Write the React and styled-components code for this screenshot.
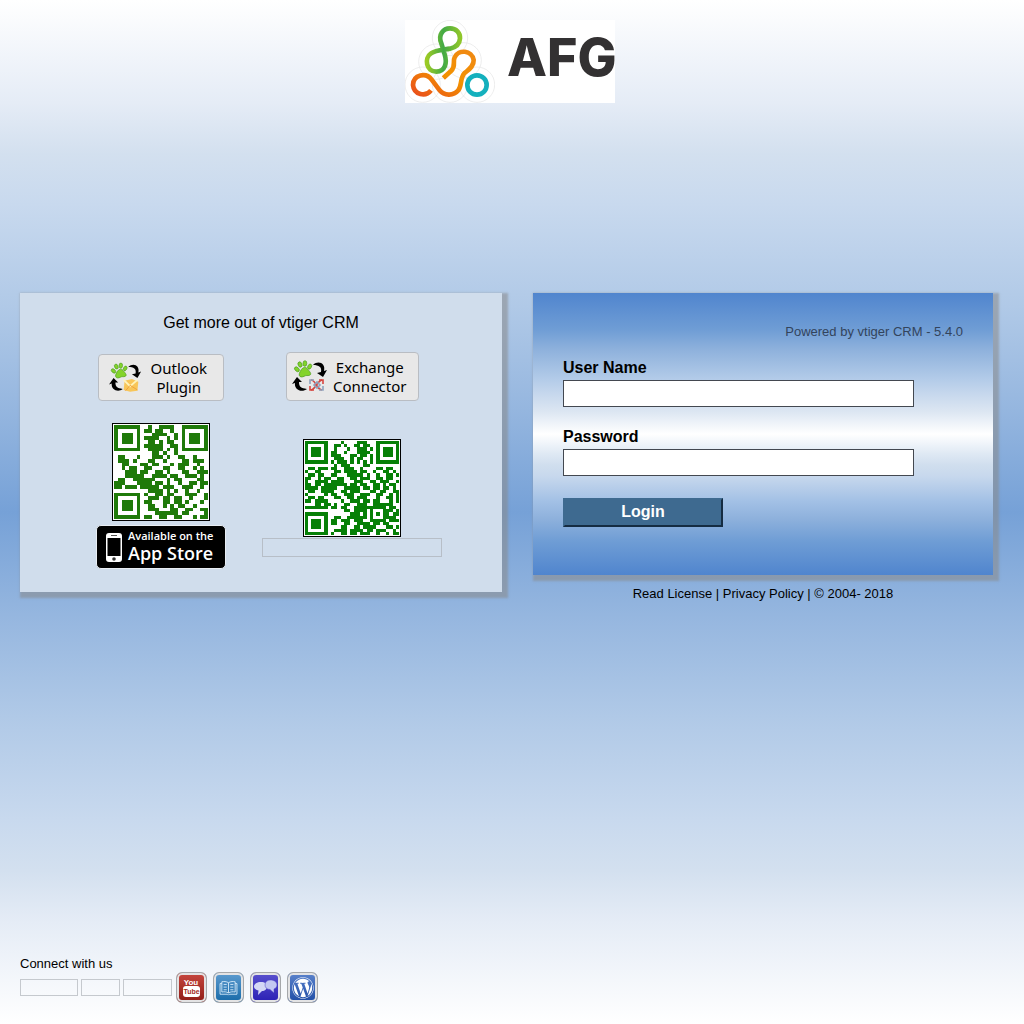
import React from "react";
import styled, { createGlobalStyle } from "styled-components";
import { FaWordpress } from "react-icons/fa";

const GlobalStyle = createGlobalStyle`
  *, *::before, *::after { box-sizing: border-box; }
  body {
    margin: 0;
    font-family: "Liberation Sans", Arial, sans-serif;
    color: #000;
  }
  a { color: inherit; text-decoration: none; }
`;

const Page = styled.div`
  min-height: 100vh;
  display: flex;
  flex-direction: column;
  padding: 20px 24px 21px 20px;
  background: linear-gradient(
    #fff 0%, #e5ecf6 10%, #d3e0ef 15%, #c8d9ee 20%, #b0c9e7 30%, #95b6df 40%,
    #76a1d7 50%, #95b6df 60%, #b0c9e7 70%, #c8d9ee 80%, #d3e0ef 85%, #e5ecf6 90%, #fff 100%
  );
`;

const Logo = styled.h1`
  display: flex;
  align-items: center;
  align-self: center;
  width: 210px;
  height: 83px;
  margin: 0;
  overflow: hidden;
  background: #fff;
`;

const LogoMark = styled.svg`
  flex: none;
  width: 90px;
  height: 83px;
`;

const LogoName = styled.span`
  padding: 0 0 8px 12px;
  font: 800 52px/60px Inter, sans-serif;
  color: #333132;
`;

const Main = styled.main`
  display: flex;
  align-items: flex-start;
  gap: 31px;
  margin-top: 190px;
  padding-right: 7px;
`;

const shadow = "3px 3px 2px 3px rgba(136, 136, 136, 0.55)";

const Promo = styled.section`
  flex: 1;
  padding: 20px 10px 23px;
  background: #d0ddec;
  box-shadow: ${shadow};
`;

const PromoTitle = styled.h2`
  margin: 0 0 19px;
  font-size: 16px;
  font-weight: 400;
  line-height: 20px;
  text-align: center;
`;

const PromoGrid = styled.div`
  display: grid;
  grid-template-columns: 162px 180px;
  justify-content: center;
  gap: 22px 20px;
`;

const PluginCell = styled.div`
  display: flex;
  justify-content: center;
  align-items: flex-end;
`;

const PluginLink = styled.a`
  display: flex;
  align-items: center;
  justify-content: space-between;
  width: ${(p) => (p.$wide ? "133px" : "126px")};
  height: ${(p) => (p.$wide ? "49px" : "47px")};
  padding: ${(p) => (p.$wide ? "0 11px 0 5px" : "0 16px 0 10px")};
  border: 1px solid #b9bdc3;
  border-radius: 4px;
  background: #e8e8e8;
  font: 15px/19px "Noto Sans", sans-serif;
  text-align: center;
`;

const CodeCell = styled.div`
  display: flex;
  flex-direction: column;
  align-items: center;
  gap: ${(p) => (p.$lowered ? "1px" : "4px")};
  padding-top: ${(p) => (p.$lowered ? "16px" : "0")};
`;

const QrFrame = styled.svg`
  display: block;
  width: 98px;
  height: 98px;
  padding: 1px;
  border: 1px solid #000;
  background: #fff;
`;

const EmptyBadge = styled.a`
  width: 180px;
  height: 19px;
  border: 1px solid #b7bec7;
`;

const StoreBadge = styled.a`
  display: flex;
  align-items: center;
  gap: 6px;
  width: 130px;
  height: 44px;
  padding: 0 9px;
  border: 1px solid #e9eef4;
  border-radius: 5px;
  background: #000;
  color: #fff;
`;

const StoreIcon = styled.svg`
  flex: none;
  width: 16px;
  height: 29px;
`;

const StoreText = styled.span`
  display: flex;
  flex-direction: column;
  padding-bottom: 3px;
  font-family: "Open Sans", sans-serif;
  white-space: nowrap;
`;

const StoreSmall = styled.span`
  font-size: 11px;
  font-weight: 600;
  line-height: 15px;
`;

const StoreLarge = styled.span`
  font-size: 18px;
  font-weight: 600;
  line-height: 20px;
`;

const LoginColumn = styled.div`
  width: 460px;
`;

const LoginForm = styled.form`
  display: flex;
  flex-direction: column;
  padding: 29px 30px 48px;
  background: linear-gradient(
    #5085ce 0%, #6f9dd5 13%, #8eb1dc 20%, #b1cae8 30%, #c7d8ed 36%, #dce6f2 42%,
    #fff 50%, #dfe9f4 57%, #d0deee 61%, #c7d8ed 65%, #a2c0e5 74%, #8eb1dc 80%, #6f9dd5 88%, #5085ce 100%
  );
  box-shadow: ${shadow};
`;

const Powered = styled.p`
  margin: 0 0 16px;
  font-size: 13px;
  line-height: 20px;
  text-align: right;
  color: #33445c;
`;

const Label = styled.label`
  margin-bottom: 2px;
  font-size: 16px;
  font-weight: 700;
  line-height: 20px;
`;

const Field = styled.input`
  width: 351px;
  max-width: 100%;
  height: 27px;
  margin-bottom: 20px;
  padding: 0 4px;
  border: 1px solid #434850;
  border-radius: 0;
  background: #fff;
  font: 16px "Liberation Sans", Arial, sans-serif;
`;

const LoginButton = styled.button`
  width: 160px;
  height: 29px;
  margin-top: 2px;
  padding: 0 0 2px;
  border: 2px solid #3e6a90;
  border-right-color: #152c42;
  border-bottom-color: #152c42;
  background: #3e6a90;
  color: #fff;
  font: 700 16px/20px "Liberation Sans", Arial, sans-serif;
`;

const Legal = styled.p`
  margin: 9px 0 0;
  font-size: 13px;
  line-height: 20px;
  text-align: center;
`;

const Footer = styled.footer`
  margin-top: auto;
`;

const FooterTitle = styled.p`
  margin: 0;
  font-size: 13px;
  line-height: 16px;
`;

const SocialRow = styled.nav`
  display: flex;
  align-items: center;
  gap: 4px;
`;

const SocialGroup = styled.div`
  display: flex;
  align-items: center;
  gap: ${(p) => p.$gap};
`;

const EmptySocial = styled.a`
  width: ${(p) => p.$width};
  height: 17px;
  border: 1px solid #c5c9ce;
`;

const SocialIcon = styled.a`
  display: grid;
  place-items: center;
  width: 31px;
  height: 31px;
  border: 1px solid #a5a7aa;
  border-radius: 6px;
  background: linear-gradient(${(p) => p.$from}, ${(p) => p.$to});
  box-shadow: inset 0 0 0 2px #e3e3e4;
  color: #fff;
`;

const TubeText = styled.text`
  font: 700 ${(p) => p.$size} "Liberation Sans", sans-serif;
  text-anchor: middle;
`;

const appStoreCode = [
  "1111111001001111001111111",
  "1000001011011001001000001",
  "1011101000111100101011101",
  "1011101011110010101011101",
  "1011101001101011001011101",
  "1000001011111001101000001",
  "1111111001111010101111111",
  "0000000000110100100000000",
  "0110001000111010011001000",
  "0111010001100100001101110",
  "0011000110110001011100100",
  "0010110011000110011001010",
  "0001110110011010001100111",
  "0001111100111101100111010",
  "0110011111100010110000110",
  "1110001111011010010011011",
  "1101110111110111001110010",
  "0000000001111010100100100",
  "1111111010011011000111001",
  "1000001001110110110010001",
  "1011101011000110110100010",
  "1011101001100101011001000",
  "1011101001110001100110011",
  "1000001000011111101100001",
  "1111111011001100110001011",
];

const androidCode = [
  "11111110000100001110001111111",
  "10000010011010011011001000001",
  "10111010010001001110101011101",
  "10111010110010001111001011101",
  "10111010111000110110101011101",
  "10000010011100101100101000001",
  "11111110101110101010101111111",
  "00000000010111000011000000000",
  "01101110110011100100001101100",
  "10011000011011110110010011010",
  "01101100110001111101001001101",
  "11001011001100110111001101100",
  "10011110111100011100110111001",
  "11011011111110110110011010110",
  "11110111110011111011011011010",
  "01100111100110111000110110011",
  "10000010110011100111001100101",
  "01101100011001101110001001101",
  "11011110000100111011011000101",
  "00011011010011001110011111100",
  "11111110110110011111111110110",
  "00000000000011011110100011101",
  "11111110000000111010101011011",
  "10000010011001111110100011110",
  "10111010110111011100111110111",
  "10111010110011001111011011000",
  "10111010000110011011110001101",
  "10000010011110111101101110010",
  "11111110100110110111001001011",
];

function QrCode({ rows, color, label }) {
  const n = rows.length;
  const d = rows
    .flatMap((row, y) => [...row].map((c, x) => (c === "1" ? `M${x} ${y}h1v1h-1z` : "")))
    .join("");
  return (
    <QrFrame viewBox={`0 0 ${n} ${n}`} role="img" aria-label={label} shapeRendering="crispEdges">
      <path d={d} fill={color} />
    </QrFrame>
  );
}

function Mark() {
  return (
    <LogoMark viewBox="15 18 270 249" aria-hidden="true" fill="none">
      <defs>
        <linearGradient id="leaf" x1="0" y1="0" x2="1" y2="0">
          <stop offset="0" stopColor="#9bca25" />
          <stop offset="0.5" stopColor="#43aa45" />
          <stop offset="1" stopColor="#8fc62a" />
        </linearGradient>
        <linearGradient id="flame" x1="0" y1="1" x2="0.8" y2="0">
          <stop offset="0" stopColor="#e94e1b" />
          <stop offset="0.55" stopColor="#f39200" />
          <stop offset="1" stopColor="#f08a10" />
        </linearGradient>
      </defs>
      <g stroke="#e4e4e4" strokeWidth="2">
        <circle cx="150" cy="72" r="53" />
        <circle cx="109" cy="143" r="53" />
        <circle cx="191" cy="139" r="53" />
        <circle cx="68" cy="212" r="53" />
        <circle cx="150" cy="212" r="53" />
        <circle cx="231" cy="212" r="53" />
      </g>
      <path
        d="M130 192L153 171C169 155 157 143 164 130C175 105 216 108 221 138C222 158 204 168 193 178C180 193 186 214 175 229C160 247 132 245 119 229L95 197C78 174 40 182 39 213C42 243 77 250 93 229"
        stroke="url(#flame)"
        strokeWidth="14"
      />
      <path
        d="M124 88C113 62 130 43 150 43C169 43 181 57 180 73C179 91 167 100 150 104C127 108 107 108 93 118C72 132 78 173 109 173C136 172 142 147 134 121C130 108 127 98 124 88Z"
        stroke="url(#leaf)"
        strokeWidth="14"
      />
      <circle cx="231" cy="213" r="29" stroke="#14b0bd" strokeWidth="14" />
    </LogoMark>
  );
}

function SyncArt({ exchange }) {
  return (
    <svg width={exchange ? 36 : 33} height="34" viewBox="0 0 36 34" aria-hidden="true">
      <g fill="#83d32b" stroke="#4f9e1e" strokeWidth="0.7" transform="rotate(-12 11 9)">
        <ellipse cx="5" cy="8" rx="1.9" ry="2.8" transform="rotate(-35 5 8)" />
        <ellipse cx="9" cy="4" rx="1.9" ry="2.8" transform="rotate(-10 9 4)" />
        <ellipse cx="14" cy="4" rx="1.9" ry="2.8" transform="rotate(15 14 4)" />
        <ellipse cx="18" cy="8" rx="1.8" ry="2.7" transform="rotate(40 18 8)" />
        <path d="M11 8c3-1 4 1 5 3s3 5 0 5.500c-2 .3-3-1-5-.2-2 .7-5 .3-5-2 0-2 3-5.300 5-6.300z" />
      </g>
      <path d="M21 5c5-5 13-2 11 6l3-1-4 7-6-4 4-1c1-5-2-7-8-7z" fill="#000" />
      <path d="M5 17l5 5-3 0c0 5 2 6 8 7-5 4-13 1-12-6l-3 1z" fill="#000" />
      {exchange ? (
        <g fill="none" strokeWidth="1.6">
          <path d="M19 20c5 0 5 9 11 10M19 30c5-1 6-9 11-10" stroke="#d5453f" />
          <path d="M18 24v-4h4M27 30h4v-4" stroke="#8da2bd" />
          <path d="M27 20h4v4M18 26v4h4" stroke="#d5453f" />
          <path d="M22 25l3-3 3 3-3 3z" stroke="#8da2bd" />
        </g>
      ) : (
        <g>
          <path d="M17 20l8-2 7 3-1 10-8 1-7-2z" fill="#f8c659" />
          <path d="M16 19l7 7 8-7" fill="none" stroke="#fff3b9" strokeWidth="2" />
          <path d="M18 31l5-6 8 5" fill="none" stroke="#f0a03a" />
        </g>
      )}
    </svg>
  );
}

export default function App() {
  return (
    <>
      <GlobalStyle />
      <Page>
        <Logo>
          <Mark />
          <LogoName>AFG</LogoName>
        </Logo>

        <Main>
          <Promo>
            <PromoTitle>Get more out of vtiger CRM</PromoTitle>
            <PromoGrid>
              <PluginCell>
                <PluginLink href="#outlook">
                  <SyncArt />
                  <span>Outlook<br />Plugin</span>
                </PluginLink>
              </PluginCell>
              <PluginCell>
                <PluginLink href="#exchange" $wide>
                  <SyncArt exchange />
                  <span>Exchange<br />Connector</span>
                </PluginLink>
              </PluginCell>
              <CodeCell>
                <QrCode rows={appStoreCode} color="#1f7a0a" label="App Store code" />
                <StoreBadge href="#app-store">
                  <StoreIcon viewBox="0 0 16 29" aria-hidden="true">
                    <rect width="16" height="29" rx="3" fill="#fff" />
                    <rect x="1.500" y="5" width="13" height="18" fill="#000" />
                    <path d="M5 2.500h6" stroke="#555" />
                    <circle cx="8" cy="26" r="1.800" fill="#333" />
                  </StoreIcon>
                  <StoreText>
                    <StoreSmall>Available on the</StoreSmall>
                    <StoreLarge>App Store</StoreLarge>
                  </StoreText>
                </StoreBadge>
              </CodeCell>
              <CodeCell $lowered>
                <QrCode rows={androidCode} color="#078007" label="Android code" />
                <EmptyBadge href="#android" aria-label="Android app" />
              </CodeCell>
            </PromoGrid>
          </Promo>

          <LoginColumn>
            <LoginForm onSubmit={(e) => e.preventDefault()}>
              <Powered>Powered by vtiger CRM - 5.4.0</Powered>
              <Label htmlFor="user">User Name</Label>
              <Field id="user" type="text" />
              <Label htmlFor="password">Password</Label>
              <Field id="password" type="password" />
              <LoginButton type="submit">Login</LoginButton>
            </LoginForm>
            <Legal>
              <a href="#license">Read License</a> | <a href="#privacy">Privacy Policy</a> | © 2004- 2018
            </Legal>
          </LoginColumn>
        </Main>

        <Footer>
          <FooterTitle>Connect with us</FooterTitle>
          <SocialRow aria-label="Connect with us">
            <SocialGroup $gap="3px">
              <EmptySocial href="#facebook" aria-label="Facebook" $width="58px" />
              <EmptySocial href="#twitter" aria-label="Twitter" $width="39px" />
              <EmptySocial href="#linkedin" aria-label="Linkedin" $width="49px" />
            </SocialGroup>
            <SocialGroup $gap="6px">
              <SocialIcon href="#youtube" $from="#c7473f" $to="#8f1c16">
                <svg width="21" height="23" viewBox="0 0 21 23">
                  <TubeText x="10" y="9" fill="#fff" $size="8px">You</TubeText>
                  <rect x="2" y="10" width="17" height="11" rx="3" fill="#fff" />
                  <TubeText x="10.500" y="18" fill="#a52c25" $size="7px">Tube</TubeText>
                </svg>
              </SocialIcon>
              <SocialIcon href="#manuals" aria-label="Manuals" $from="#5d9bcf" $to="#176aa8">
                <svg width="19" height="16" viewBox="0 0 21 18" fill="none" stroke="#d9ecf9">
                  <path d="M10.500 3C8 1.500 5 1.500 3 2v11.500c3-.5 5-.3 7.500 1 2.500-1.300 4.500-1.500 7.500-1V2c-2-.5-5-.5-7.500 1zM10.500 3v11.500" />
                  <path d="M3 4H1v12h8.500l1 1 1-1H20V4h-2M5 5h3.500M5 8h3.500M5 11h3.500M12.500 5H16M12.500 8H16M12.500 11H16" />
                </svg>
              </SocialIcon>
              <SocialIcon href="#forums" aria-label="Forums" $from="#5a51ce" $to="#2a20b4">
                <svg width="23" height="17" viewBox="0 0 23 17">
                  <path d="M7 3c4 0 6 2 6 4.500S11 12 8 12l-4 4 .5-4.500C2 11 0 9.500 0 7.500 0 5 3 3 7 3z" fill="#d4d8f5" />
                  <path d="M16.500 1C20 1 23 3 23 5.800c0 2-1 3.400-3 4.200v4l-4-3.500c-3 0-5-2-5-4.500C11 3 13 1 16.500 1z" fill="#c3c8f2" stroke="#4a41c4" strokeWidth="0.5" />
                </svg>
              </SocialIcon>
              <SocialIcon href="#blog" aria-label="Blog" $from="#5b83cc" $to="#1f4ca5">
                <FaWordpress size={22} />
              </SocialIcon>
            </SocialGroup>
          </SocialRow>
        </Footer>
      </Page>
    </>
  );
}
